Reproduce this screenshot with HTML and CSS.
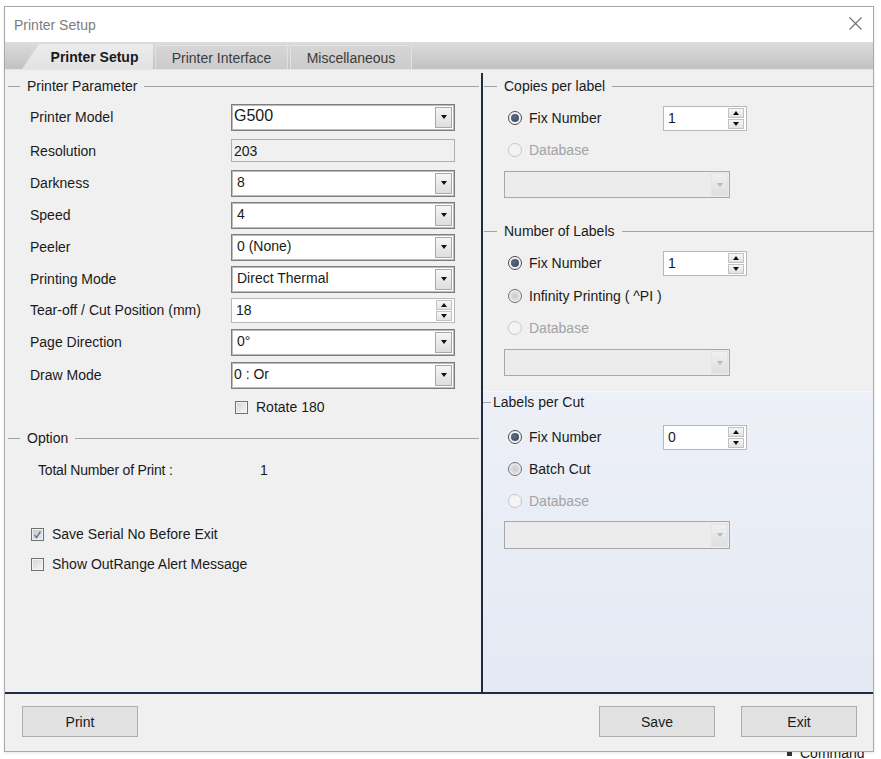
FILE: index.html
```html
<!DOCTYPE html>
<html lang="en">

<head>
    <meta charset="UTF-8">
    <meta name="viewport" content="width=device-width, initial-scale=1.0">
    <title>Printer Setup</title>
    <link rel="stylesheet" href="styles.css">
</head>

<body>
    <div class="behind"><span class="behind-mark"></span>Command</div>

    <div class="dialog">
        <div class="titlebar">
            <span class="title">Printer Setup</span>
            <svg class="close" width="13" height="13" viewBox="0 0 13 13">
                <path d="M0.5 0.5 L12.5 12.5 M12.5 0.5 L0.5 12.5" stroke="#6f6f6f" stroke-width="1.1" fill="none" />
            </svg>
        </div>

        <div class="tabstrip">
            <div class="tab active">Printer Setup</div>
            <div class="tab tab-interface">Printer Interface</div>
            <div class="tab tab-misc">Miscellaneous</div>
        </div>

        <div class="content">
            <div class="pane left">
                <div class="legend"><span>Printer Parameter</span></div>

                <div class="form-row h34">
                    <label>Printer Model</label>
                    <div class="combo"><span class="value big">G500</span><span class="drop"></span></div>
                </div>
                <div class="form-row h33">
                    <label>Resolution</label>
                    <div class="readonly">203</div>
                </div>
                <div class="form-row">
                    <label>Darkness</label>
                    <div class="combo"><span class="value">8</span><span class="drop"></span></div>
                </div>
                <div class="form-row">
                    <label>Speed</label>
                    <div class="combo"><span class="value">4</span><span class="drop"></span></div>
                </div>
                <div class="form-row">
                    <label>Peeler</label>
                    <div class="combo"><span class="value">0 (None)</span><span class="drop"></span></div>
                </div>
                <div class="form-row">
                    <label>Printing Mode</label>
                    <div class="combo"><span class="value">Direct Thermal</span><span class="drop"></span></div>
                </div>
                <div class="form-row h30">
                    <label>Tear-off / Cut Position (mm)</label>
                    <div class="numeric wide"><span class="value">18</span><span class="spin"><i class="up"></i><i class="down"></i></span></div>
                </div>
                <div class="form-row h34">
                    <label>Page Direction</label>
                    <div class="combo"><span class="value">0°</span><span class="drop"></span></div>
                </div>
                <div class="form-row">
                    <label>Draw Mode</label>
                    <div class="combo"><span class="value tight">0 : Or</span><span class="drop"></span></div>
                </div>
                <div class="form-row rotate-row">
                    <span class="check"></span><span class="check-text">Rotate 180</span>
                </div>

                <div class="legend option"><span>Option</span></div>

                <div class="total-row">
                    <span class="total-label">Total Number of Print :</span>
                    <span>1</span>
                </div>

                <div class="check-row first">
                    <span class="check checked">
                        <svg width="11" height="11" viewBox="0 0 11 11"><path d="M2.5 6 L4.5 8.5 L8.5 2.5" stroke="#6b7788" stroke-width="1.4" fill="none" /></svg>
                    </span>
                    <span class="check-text">Save Serial No Before Exit</span>
                </div>
                <div class="check-row">
                    <span class="check"></span>
                    <span class="check-text">Show OutRange Alert Message</span>
                </div>
            </div>

            <div class="divider"></div>

            <div class="pane right">
                <div class="legend"><span>Copies per label</span></div>
                <div class="radio-row first">
                    <span class="radio-label"><span class="radio on"></span>Fix Number</span>
                    <div class="numeric"><span class="value">1</span><span class="spin"><i class="up"></i><i class="down"></i></span></div>
                </div>
                <div class="radio-row">
                    <span class="radio-label disabled"><span class="radio off"></span>Database</span>
                </div>
                <div class="combo disabled"><span class="drop"></span></div>

                <div class="legend labels"><span>Number of Labels</span></div>
                <div class="radio-row first">
                    <span class="radio-label"><span class="radio on"></span>Fix Number</span>
                    <div class="numeric"><span class="value">1</span><span class="spin"><i class="up"></i><i class="down"></i></span></div>
                </div>
                <div class="radio-row h33">
                    <span class="radio-label"><span class="radio"></span>Infinity Printing ( ^PI )</span>
                </div>
                <div class="radio-row">
                    <span class="radio-label disabled"><span class="radio off"></span>Database</span>
                </div>
                <div class="combo disabled"><span class="drop"></span></div>

                <div class="cut-section">
                    <div class="legend short"><span>Labels per Cut</span></div>
                    <div class="radio-row cut-first">
                        <span class="radio-label"><span class="radio on"></span>Fix Number</span>
                        <div class="numeric"><span class="value">0</span><span class="spin"><i class="up"></i><i class="down"></i></span></div>
                    </div>
                    <div class="radio-row">
                        <span class="radio-label"><span class="radio"></span>Batch Cut</span>
                    </div>
                    <div class="radio-row">
                        <span class="radio-label disabled"><span class="radio off"></span>Database</span>
                    </div>
                    <div class="combo disabled cut-combo"><span class="drop"></span></div>
                </div>
            </div>
        </div>

        <div class="footer">
            <button type="button">Print</button>
            <div class="footer-right">
                <button type="button">Save</button>
                <button type="button">Exit</button>
            </div>
        </div>
    </div>
</body>

</html>
```

FILE: styles.css
```css
body {
    margin: 0;
    background: #fff;
    font-family: "Liberation Sans", Arial, sans-serif;
    font-size: 14px;
    color: #1a1a1a;
    position: relative;
    min-height: 759px;
}

.behind {
    position: absolute;
    left: 787px;
    top: 745px;
    z-index: 0;
    font-size: 14px;
    color: #222;
    display: flex;
    align-items: center;
    gap: 8px;
}

.behind-mark {
    width: 5px;
    height: 5px;
    background: #333;
}

.dialog {
    position: relative;
    z-index: 1;
    box-sizing: border-box;
    width: 870px;
    height: 746px;
    margin: 6px 0 0 4px;
    border: 1px solid #a9a9a9;
    background: #f0f0f0;
    display: flex;
    flex-direction: column;
    box-shadow: 0 1px 3px rgba(0, 0, 0, 0.1);
}

.titlebar {
    height: 35px;
    flex: none;
    background: #fff;
    display: flex;
    align-items: center;
    justify-content: space-between;
    padding: 0 11px 0 9px;
}

.title {
    color: #7d7d7d;
}

.close {
    margin-top: -2px;
}

/* tabs */

.tabstrip {
    height: 28px;
    flex: none;
    box-sizing: border-box;
    background: linear-gradient(#dcdcdc, #c2c2c2);
    display: flex;
    align-items: flex-end;
    padding-left: 17px;
    border-bottom: 1px solid #e4e4e4;
}

.tab {
    box-sizing: border-box;
    height: 24px;
    display: flex;
    align-items: center;
    justify-content: center;
    color: #3c3c3c;
    background: linear-gradient(#d6d6d6, #cbcbcb);
    border: 1px solid #e2e2e2;
    border-bottom: none;
    margin-left: 2px;
}

.tab.active {
    width: 131px;
    height: 25px;
    margin-left: 0;
    padding-left: 14px;
    font-weight: bold;
    color: #1a1a1a;
    background: linear-gradient(#ececec, #e2e2e2);
    border: none;
    clip-path: polygon(17px 0, 100% 0, 100% 100%, 0 100%);
}

.tab-interface {
    width: 133px;
}

.tab-misc {
    width: 122px;
}

/* content */

.content {
    flex: 1;
    display: flex;
    border-bottom: 2px solid #1d2b45;
}

.pane {
    box-sizing: border-box;
    padding-top: 7px;
}

.pane.left {
    width: 476px;
}

.divider {
    width: 2px;
    margin-top: 3px;
    background: #1d2b45;
}

.pane.right {
    flex: 1;
    display: flex;
    flex-direction: column;
}

.legend {
    height: 18px;
    display: flex;
    align-items: center;
    color: #1a1a1a;
    margin-bottom: 5px;
}

.legend::before,
.legend::after {
    content: "";
    height: 1px;
    background: #a3a3a3;
}

.legend::before {
    width: 12px;
    margin-left: 3px;
}

.legend::after {
    flex: 1;
    margin-right: 2px;
}

.legend span {
    margin: 0 7px;
}

.right .legend::before {
    width: 13px;
    margin-left: 1px;
}

.right .legend::after {
    margin-right: 0;
}

.legend.option {
    margin-top: 6px;
}

.legend.labels {
    margin-top: 24px;
}

.right .legend.short::before {
    width: 8px;
    margin-left: 0;
}

.legend.short::after {
    display: none;
}

.legend.short span {
    margin: 0 0 0 2px;
}

/* parameter rows */

.form-row {
    height: 32px;
    display: flex;
    align-items: center;
    padding-left: 25px;
}

.form-row.h34 {
    height: 34px;
}

.form-row.h33 {
    height: 33px;
}

.form-row.h30 {
    height: 30px;
}

.form-row label {
    width: 201px;
}

.combo {
    box-sizing: border-box;
    width: 224px;
    height: 27px;
    background: #fff;
    border: 1px solid #7e7e7e;
    box-shadow: inset 0 0 0 1px #bcbcbc;
    display: flex;
    align-items: center;
}

.combo .value {
    flex: 1;
    padding-left: 5px;
    margin-top: -2px;
}

.combo .value.big {
    font-size: 16px;
    padding-left: 2px;
}

.combo .value.tight {
    padding-left: 2px;
}

.drop {
    box-sizing: border-box;
    width: 17px;
    height: 21px;
    margin-right: 2px;
    margin-left: auto;
    border: 1px solid #a8a8a8;
    background: linear-gradient(#f6f6f6, #dedede);
    display: flex;
    align-items: center;
    justify-content: center;
}

.drop::after {
    content: "";
    border-left: 3.5px solid transparent;
    border-right: 3.5px solid transparent;
    border-top: 4px solid #111;
}

.combo.disabled {
    width: 226px;
    margin: 5px 0 0 21px;
    background: #ececec;
    border-color: #a8a8a8;
    box-shadow: none;
}

.combo.disabled .drop {
    height: 23px;
    margin-right: 1px;
    border-color: #e4e4e4;
    background: linear-gradient(#f0f0f0, #dcdfe4);
}

.combo.disabled .drop::after {
    border-top-color: #b8b8b8;
}

.combo.cut-combo {
    margin-top: 4px;
    height: 28px;
}

.readonly {
    box-sizing: border-box;
    width: 224px;
    height: 23px;
    padding-left: 2px;
    border: 1px solid #abb0ba;
    background: #f0f0f0;
    display: flex;
    align-items: center;
}

.numeric {
    box-sizing: border-box;
    width: 84px;
    height: 25px;
    background: #fff;
    border: 1px solid #b7b7b7;
    display: flex;
    align-items: center;
}

.numeric.wide {
    width: 224px;
}

.numeric .value {
    flex: 1;
    padding-left: 4px;
}

.spin {
    width: 16px;
    height: 21px;
    margin-right: 2px;
    display: flex;
    flex-direction: column;
    gap: 1px;
}

.spin i {
    flex: 1;
    box-sizing: border-box;
    border: 1px solid #c2c2c2;
    background: linear-gradient(#f7f7f7, #e2e2e2);
    display: flex;
    align-items: center;
    justify-content: center;
}

.spin i.up::after {
    content: "";
    border-left: 3.5px solid transparent;
    border-right: 3.5px solid transparent;
    border-bottom: 4px solid #111;
}

.spin i.down::after {
    content: "";
    border-left: 3.5px solid transparent;
    border-right: 3.5px solid transparent;
    border-top: 4px solid #111;
}

/* checkboxes */

.check {
    box-sizing: border-box;
    width: 13px;
    height: 13px;
    border: 1px solid #707070;
    background: linear-gradient(135deg, #d4d4d4, #f6f6f6);
    box-shadow: inset 0 0 0 1px #f4f4f4;
    display: flex;
    align-items: center;
    justify-content: center;
}

.check.checked {
    background: linear-gradient(135deg, #c3c8d0, #e8ebef);
    box-shadow: inset 0 0 0 1px #eef0f3;
}

.check-text {
    margin-left: 8px;
}

.rotate-row {
    padding-left: 230px;
}

.total-row {
    margin-top: 13px;
    height: 20px;
    display: flex;
    align-items: center;
    padding-left: 33px;
}

.total-label {
    width: 222px;
    letter-spacing: -0.2px;
}

.check-row {
    height: 30px;
    display: flex;
    align-items: center;
    padding-left: 26px;
}

.check-row.first {
    margin-top: 39px;
}

/* radios */

.radio-row {
    height: 32px;
    display: flex;
    align-items: center;
    padding-left: 25px;
}

.radio-row.h33 {
    height: 33px;
}

.radio-row.first {
    margin-top: 2px;
}

.radio-row.cut-first {
    margin-top: 10px;
}

.radio-label {
    width: 155px;
    display: flex;
    align-items: center;
}

.radio-label.disabled {
    color: #a3a3a3;
}

.radio {
    box-sizing: border-box;
    width: 14px;
    height: 14px;
    margin-right: 7px;
    border-radius: 50%;
    border: 1px solid #6d6d6d;
    background: radial-gradient(circle, #c9c9c9 0, #dcdcdc 45%, #f4f4f4 75%);
    display: flex;
    align-items: center;
    justify-content: center;
}

.radio.on {
    border-color: #4a4a4a;
    background: #f4f4f4;
}

.radio.on::after {
    content: "";
    width: 8px;
    height: 8px;
    border-radius: 50%;
    background: radial-gradient(circle at 40% 40%, #5a6d85, #34435a);
}

.radio.off {
    border-color: #c7c7c7;
    background: #f4f4f4;
}

.cut-section {
    flex: 1;
    margin-top: 15px;
    padding-top: 1px;
    border-top: 1px solid #f6f7fa;
    background: linear-gradient(#edf0f7, #e4e9f3);
}

/* footer */

.footer {
    height: 57px;
    flex: none;
    box-sizing: border-box;
    display: flex;
    justify-content: space-between;
    align-items: flex-start;
    padding: 12px 16px 0 17px;
}

.footer-right {
    display: flex;
    gap: 26px;
}

button {
    width: 116px;
    height: 31px;
    font-family: "Liberation Sans", Arial, sans-serif;
    font-size: 14px;
    color: #1a1a1a;
    background: #e1e1e1;
    border: 1px solid #adadad;
    border-radius: 0;
    padding: 0;
}
```
